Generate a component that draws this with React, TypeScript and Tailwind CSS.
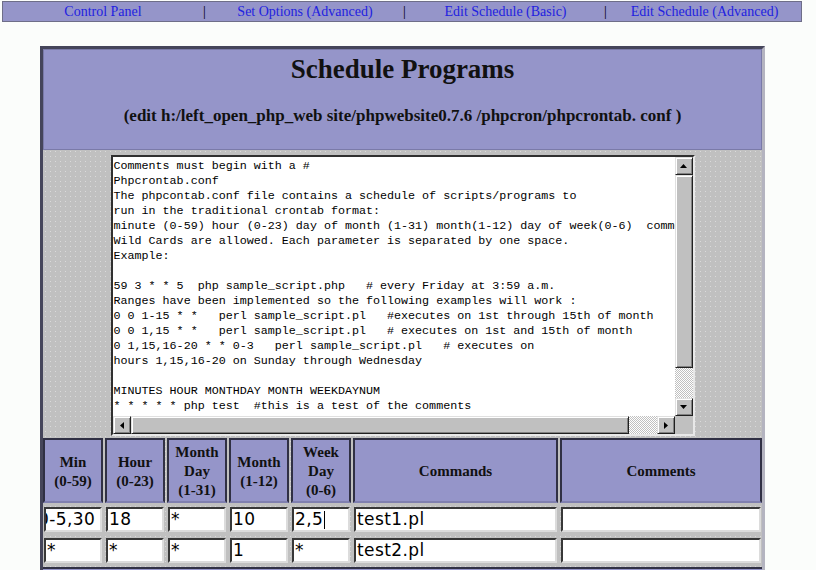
import React from 'react'

const lines = [
  'Comments must begin with a #',
  'Phpcrontab.conf',
  'The phpcontab.conf file contains a schedule of scripts/programs to',
  'run in the traditional crontab format:',
  'minute (0-59) hour (0-23) day of month (1-31) month(1-12) day of week(0-6)  comments',
  'Wild Cards are allowed. Each parameter is separated by one space.',
  'Example:',
  '',
  '59 3 * * 5  php sample_script.php   # every Friday at 3:59 a.m.',
  'Ranges have been implemented so the following examples will work :',
  '0 0 1-15 * *   perl sample_script.pl   #executes on 1st through 15th of month',
  '0 0 1,15 * *   perl sample_script.pl   # executes on 1st and 15th of month',
  '0 1,15,16-20 * * 0-3   perl sample_script.pl   # executes on',
  'hours 1,15,16-20 on Sunday through Wednesday',
  '',
  'MINUTES HOUR MONTHDAY MONTH WEEKDAYNUM',
  '* * * * * php test  #this is a test of the comments',
]

const headers = [
  ['Min', '(0-59)'],
  ['Hour', '(0-23)'],
  ['Month', 'Day', '(1-31)'],
  ['Month', '(1-12)'],
  ['Week', 'Day', '(0-6)'],
  ['Commands'],
  ['Comments'],
]

const rows = [
  ['0-5,30', '18', '*', '10', '2,5', 'test1.pl', ''],
  ['*', '*', '*', '1', '*', 'test2.pl', ''],
]

const grey = 'bg-[#c0c0c0] bg-[radial-gradient(circle,#dadada_0.7px,transparent_0.9px)] bg-[length:5px_5px]'
const raised = 'bg-[#c0c0c0] border border-t-[#e0e0e0] border-l-[#e0e0e0] border-r-[#202020] border-b-[#202020] shadow-[inset_1px_1px_#ffffff,inset_-1px_-1px_#808080]'
const checker = 'bg-[repeating-conic-gradient(#c0c0c0_0_25%,#ffffff_0_50%)] bg-[length:2px_2px]'

function Arrow({ dir }: { dir: 'up' | 'down' | 'left' | 'right' }) {
  const pts = { up: '0,4 7,4 3.5,0', down: '0,0 7,0 3.5,4', left: '4,0 4,7 0,3.5', right: '0,0 0,7 4,3.5' }[dir]
  const vertical = dir === 'up' || dir === 'down'
  return (
    <div className={`w-[18px] h-[18px] shrink-0 flex items-center justify-center ${raised}`}>
      <svg width={vertical ? 7 : 4} height={vertical ? 4 : 7}>
        <polygon points={pts} fill="#000" />
      </svg>
    </div>
  )
}

export default function App() {
  return (
    <div className="h-screen overflow-hidden bg-[#fbfdfb] pt-[1px]">
      {/* nav */}
      <div className="ml-[2px] w-[800px] h-[21px] flex items-center bg-[#9595c9] border border-[#6e6e88] font-['Liberation_Serif',serif] text-[14px] text-[#2222e0]">
        <span className="w-[200px] text-center">Control Panel</span>
        <span className="w-[4px] text-black leading-none">|</span>
        <span className="w-[196px] text-center">Set Options (Advanced)</span>
        <span className="w-[4px] text-black leading-none">|</span>
        <span className="w-[197px] text-center">Edit Schedule (Basic)</span>
        <span className="w-[4px] text-black leading-none">|</span>
        <span className="flex-1 text-center">Edit Schedule (Advanced)</span>
      </div>

      {/* main table */}
      <div className={`ml-[40px] mt-[24px] w-[725px] border-[3px] border-t-[#45455a] border-l-[#45455a] border-r-[#b4b4c0] border-b-[#b4b4c0] ${grey} font-['Liberation_Serif',serif] text-[#111]`}>
        <div className="h-[101px] bg-[#9595c9] border border-[#7a7aa8] flex flex-col items-center">
          <h1 className="mt-[4px] text-[27px] leading-[30px] font-bold">Schedule Programs</h1>
          <p className="mt-[21px] text-[17px] leading-[21px] font-bold">
            (edit h:/left_open_php_web site/phpwebsite0.7.6 /phpcron/phpcrontab. conf )
          </p>
        </div>

        {/* textarea */}
        <div className="h-[288px] pt-[5px] flex justify-center">
          <div className="w-[584px] h-[281px] bg-white border-2 border-t-[#303030] border-l-[#303030] border-r-[#e8e8e8] border-b-[#e8e8e8] flex flex-col">
            <div className="flex flex-1 min-h-0">
              <div className="flex-1 overflow-hidden pl-[1px] pt-[2px] font-['Liberation_Mono',monospace] text-[11.7px] leading-[15px] text-black whitespace-pre">
                {lines.map((l, i) => (
                  <div key={i} className="h-[15px]">{l}</div>
                ))}
              </div>
              <div className="w-[18px] flex flex-col bg-[#c0c0c0]">
                <Arrow dir="up" />
                <div className={`h-[193px] ${raised}`} />
                <div className={`flex-1 ${checker}`} />
                <Arrow dir="down" />
              </div>
            </div>
            <div className="h-[18px] flex">
              <Arrow dir="left" />
              <div className={`w-[498px] ${raised}`} />
              <div className={`flex-1 ${checker}`} />
              <Arrow dir="right" />
              <div className="w-[18px] bg-[#c0c0c0]" />
            </div>
          </div>
        </div>

        {/* schedule grid */}
        <div className="grid grid-cols-[60px_60px_60px_60px_60px_205px_1fr] gap-[2px]">
          {headers.map((h, i) => (
            <div
              key={i}
              className="h-[65px] bg-[#9595c9] border-2 border-t-[#303044] border-l-[#303044] border-r-[#303044] border-b-[#8080b0] flex flex-col items-center justify-center pt-[2px] text-[15px] leading-[19px] font-bold"
            >
              {h.map((t, j) => (
                <span key={j}>{t}</span>
              ))}
            </div>
          ))}
          {rows.map((r, ri) =>
            r.map((v, ci) => (
              <div key={`${ri}-${ci}`} className="h-[29px] pt-[2px] px-[1px]">
                <div className="h-[25px] bg-white border-2 border-t-[#383838] border-l-[#383838] border-r-[#dcdcdc] border-b-[#dcdcdc] overflow-hidden flex items-center font-['DejaVu_Sans',sans-serif] text-[17px] tracking-[0.4px] text-black whitespace-nowrap">
                  <span className={ri === 0 && ci === 0 ? 'ml-[-8px]' : 'ml-[1px]'}>{v}</span>
                  {ri === 0 && ci === 4 && <span className="w-[1px] h-[18px] bg-black ml-[1px]" />}
                </div>
              </div>
            )),
          )}
          <div className="col-span-7 h-[30px] bg-[#9595c9] border-t-2 border-[#303044]" />
        </div>
      </div>
    </div>
  )
}
